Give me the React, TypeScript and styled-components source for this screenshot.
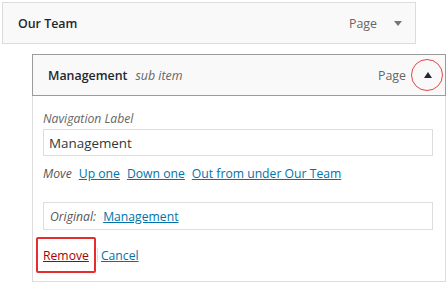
import React from 'react';
import styled, { createGlobalStyle } from 'styled-components';

const GlobalStyle = createGlobalStyle`
  html, body {
    margin: 0;
    padding: 0;
    background: #ffffff;
  }
  body {
    font-family: "Open Sans", "Noto Sans", sans-serif;
    color: #23282d;
  }
`;

const Page = styled.div`
  width: 448px;
  height: 283px;
  padding: 2px 0 0 2px;
  box-sizing: border-box;
  overflow: hidden;
`;

const MenuBar = styled.div<{ $active?: boolean; $width: number }>`
  position: relative;
  display: flex;
  align-items: center;
  width: ${({ $width }) => $width}px;
  height: 42px;
  box-sizing: border-box;
  background: #f9f9f9;
  border: 1px solid ${({ $active }) => ($active ? '#9b9b9b' : '#dcdcdc')};
  padding: 0 13px 0 15px;
`;

const Title = styled.span`
  font-weight: 600;
  font-size: 12.4px;
  color: #23282d;
`;

const SubLabel = styled.span`
  font-style: italic;
  font-size: 12.4px;
  color: #666;
  margin-left: 8px;
`;

const ItemType = styled.span`
  margin-left: auto;
  font-size: 12.4px;
  color: #666;
`;

const Arrow = styled.span<{ $up?: boolean }>`
  width: 0;
  height: 0;
  margin-left: ${({ $up }) => ($up ? '18px' : '17px')};
  border-left: 4px solid transparent;
  border-right: 4px solid transparent;
  ${({ $up }) =>
    $up ? 'border-bottom: 6px solid #23282d;' : 'border-top: 5px solid #72777c;'}
`;

const Highlight = styled.span`
  position: absolute;
  right: 2px;
  top: 4px;
  width: 30px;
  height: 30px;
  border: 1px solid #e64545;
  border-radius: 50%;
`;

const SubItem = styled.div`
  margin: 10px 0 0 30px;
  width: 414px;
`;

const Settings = styled.div`
  border: 1px solid #dcdcdc;
  border-top: none;
  padding: 4px 12px 7px 10px;
  height: 186px;
  box-sizing: border-box;
`;

const FieldLabel = styled.div`
  font-style: italic;
  font-size: 12.2px;
  color: #666;
  line-height: 18px;
  margin-top: 10px;
`;

const TextInput = styled.input`
  display: block;
  width: 100%;
  height: 27px;
  box-sizing: border-box;
  margin: 1px 0 0;
  padding: 0 5px;
  border: 1px solid #dddddd;
  font-family: inherit;
  font-size: 13.4px;
  color: #32373c;
  background: #fff;
  outline: none;
`;

const MoveRow = styled.div`
  display: flex;
  gap: 7px;
  margin-top: 9px;
  font-size: 12.2px;
  line-height: 18px;
`;

const MoveLabel = styled.span`
  font-style: italic;
  color: #555;
`;

const Link = styled.a<{ $danger?: boolean }>`
  color: ${({ $danger }) => ($danger ? '#a00' : '#0073aa')};
  text-decoration: underline;
  font-size: 12.2px;
  cursor: pointer;
`;

const OriginalBox = styled.div`
  display: flex;
  align-items: center;
  gap: 7px;
  height: 28px;
  margin-top: 19px;
  padding: 0 6px;
  border: 1px solid #dddddd;
  box-sizing: border-box;
  font-size: 12.2px;
`;

const Actions = styled.div`
  display: flex;
  align-items: center;
  margin: 7px 0 0 -7px;
`;

const RemoveFrame = styled.div`
  display: flex;
  align-items: center;
  height: 36px;
  padding: 0 5px;
  box-sizing: border-box;
  border: 2px solid #e52d2d;
  border-radius: 2px;
`;

const Separator = styled.span`
  width: 1px;
  height: 14px;
  background: #dcdcdc;
  margin: 0 3px 0 1px;
`;

export default function App() {
  return (
    <Page>
      <GlobalStyle />
      <MenuBar $width={414}>
        <Title>Our Team</Title>
        <ItemType>Page</ItemType>
        <Arrow />
      </MenuBar>
      <SubItem>
        <MenuBar $active $width={414}>
          <Title>Management</Title>
          <SubLabel>sub item</SubLabel>
          <ItemType>Page</ItemType>
          <Arrow $up />
          <Highlight />
        </MenuBar>
        <Settings>
          <FieldLabel>Navigation Label</FieldLabel>
          <TextInput defaultValue="Management" />
          <MoveRow>
            <MoveLabel>Move</MoveLabel>
            <Link>Up one</Link>
            <Link>Down one</Link>
            <Link>Out from under Our Team</Link>
          </MoveRow>
          <OriginalBox>
            <MoveLabel>Original:</MoveLabel>
            <Link>Management</Link>
          </OriginalBox>
          <Actions>
            <RemoveFrame>
              <Link $danger>Remove</Link>
            </RemoveFrame>
            <Separator />
            <Link>Cancel</Link>
          </Actions>
        </Settings>
      </SubItem>
    </Page>
  );
}
